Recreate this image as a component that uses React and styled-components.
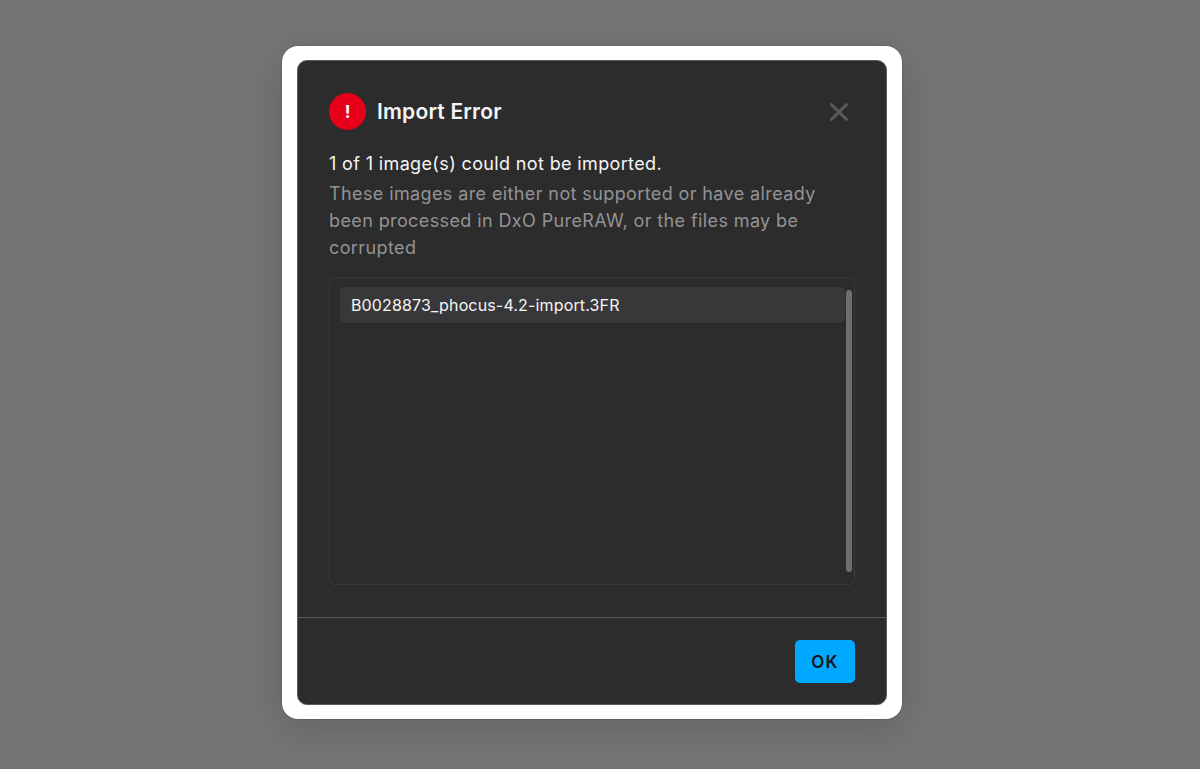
import styled, { createGlobalStyle } from 'styled-components'
import { X } from 'lucide-react'

const GlobalStyle = createGlobalStyle`
  html, body {
    margin: 0;
    height: 100%;
    background: #757575;
    font-family: Inter, "Noto Sans", sans-serif;
  }
  #root {
    height: 100%;
  }
`

const Overlay = styled.div`
  height: 769px;
  display: flex;
  justify-content: center;
  padding: 46px 16px 0 0;
  box-sizing: border-box;
`

const Frame = styled.div`
  width: 620px;
  height: 673px;
  box-sizing: border-box;
  padding: 14px 15px;
  background: #fff;
  border-radius: 16px;
  box-shadow: 0 0 0 1px rgba(0, 0, 0, 0.08), 0 10px 40px rgba(0, 0, 0, 0.16);
`

const Dialog = styled.div`
  height: 100%;
  box-sizing: border-box;
  display: flex;
  flex-direction: column;
  background: #2c2c2c;
  border: 1px solid #5a5a5a;
  border-radius: 10px;
`

const Header = styled.div`
  display: flex;
  align-items: center;
  padding: 32px 31px 0 31px;
  height: 37px;
`

const ErrorBadge = styled.div`
  width: 37px;
  height: 37px;
  border-radius: 50%;
  background: #e60019;
  color: #fff;
  display: flex;
  align-items: center;
  justify-content: center;
  font-size: 17px;
  font-weight: 700;
`

const Title = styled.h1`
  flex: 1;
  margin: 0 0 0 11px;
  font-size: 21px;
  line-height: 37px;
  font-weight: 600;
  letter-spacing: 0.2px;
  color: #f5f5f5;
`

const CloseButton = styled.button`
  width: 32px;
  height: 32px;
  padding: 0;
  border: 0;
  background: none;
  color: #5c5c5c;
  display: flex;
  align-items: center;
  justify-content: center;
`

const Body = styled.div`
  flex: 1;
  display: flex;
  flex-direction: column;
  padding: 20px 31px 32px 31px;
  min-height: 0;
`

const Lead = styled.p`
  margin: 0 0 3px;
  font-size: 18px;
  line-height: 27px;
  letter-spacing: 0.36px;
  color: #f5f5f5;
`

const Detail = styled.p`
  margin: 0 0 16px;
  font-size: 18px;
  line-height: 27px;
  letter-spacing: 0.39px;
  color: #939396;
`

const FileBox = styled.div`
  flex: 1;
  position: relative;
  box-sizing: border-box;
  padding: 9px 10px;
  border: 1px solid #3a3a3a;
  border-radius: 6px;
`

const FileRow = styled.div`
  width: 505px;
  height: 36px;
  box-sizing: border-box;
  padding-left: 11px;
  display: flex;
  align-items: center;
  background: #38383a;
  border-radius: 5px;
  font-size: 16px;
  letter-spacing: 0.15px;
  color: #f5f5f5;
`

const ScrollThumb = styled.div`
  position: absolute;
  top: 12px;
  right: 2px;
  width: 6px;
  height: 282px;
  background: #6e6e73;
  border-radius: 3px;
`

const Footer = styled.div`
  display: flex;
  justify-content: flex-end;
  padding: 22px 31px 21px 31px;
  border-top: 1px solid #5a5a5a;
`

const OkButton = styled.button`
  width: 60px;
  height: 43px;
  padding: 0;
  border: 0;
  border-radius: 5px;
  background: #00a8ff;
  color: #141414;
  font-family: inherit;
  font-size: 17px;
  font-weight: 600;
  letter-spacing: 1.3px;
`

export default function App() {
  return (
    <>
      <GlobalStyle />
      <Overlay>
        <Frame>
          <Dialog>
            <Header>
              <ErrorBadge>!</ErrorBadge>
              <Title>Import Error</Title>
              <CloseButton>
                <X size={30} strokeWidth={2.2} />
              </CloseButton>
            </Header>
            <Body>
              <Lead>1 of 1 image(s) could not be imported.</Lead>
              <Detail>
                These images are either not supported or have already been processed in DxO PureRAW, or the files may be corrupted
              </Detail>
              <FileBox>
                <FileRow>B0028873_phocus-4.2-import.3FR</FileRow>
                <ScrollThumb />
              </FileBox>
            </Body>
            <Footer>
              <OkButton>OK</OkButton>
            </Footer>
          </Dialog>
        </Frame>
      </Overlay>
    </>
  )
}
